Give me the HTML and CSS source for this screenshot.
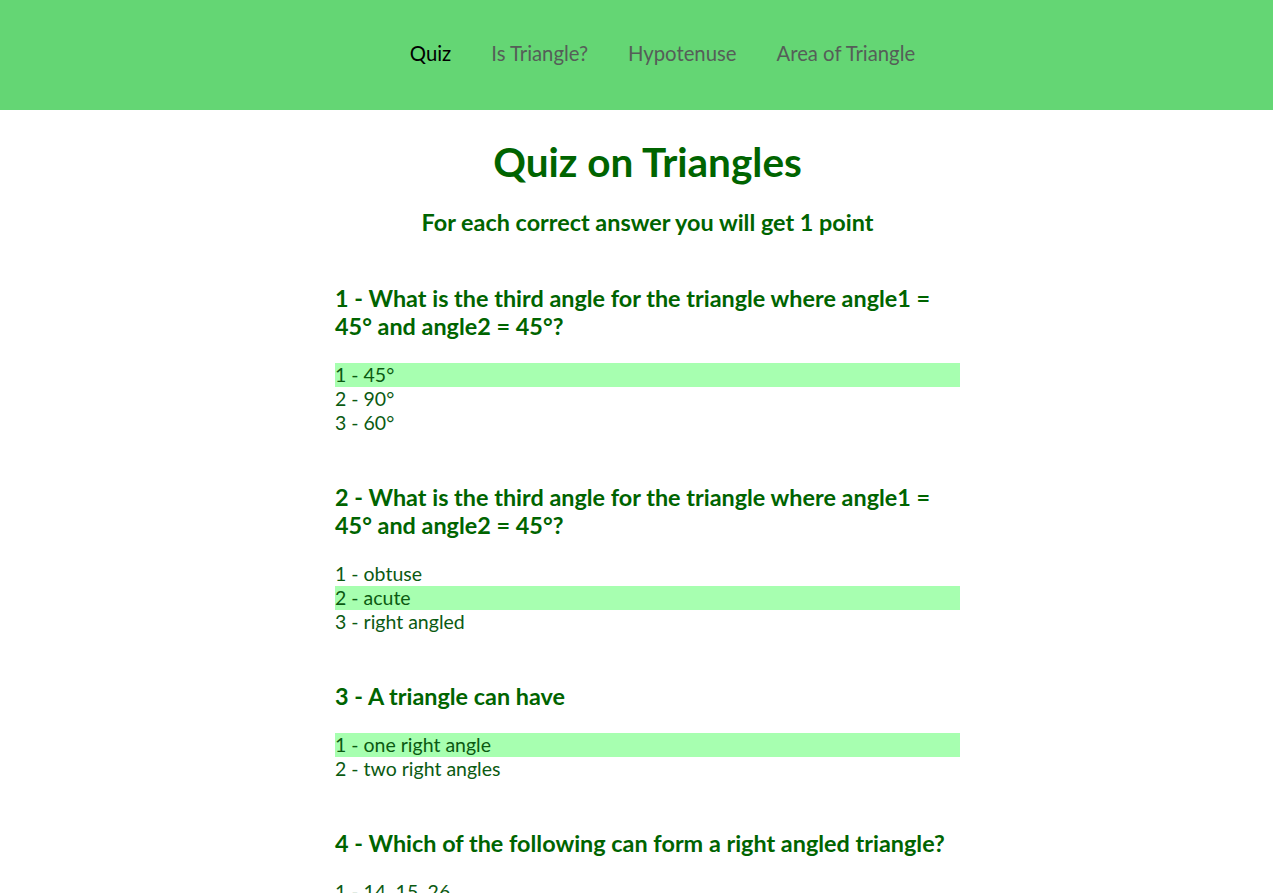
FILE: index.html
```html
<!DOCTYPE html>
<html lang="en">
<head>
<meta charset="utf-8">
<title>Quiz on Triangles</title>
<link rel="stylesheet" href="styles.css">
</head>
<body>
<header class="topbar">
  <nav class="nav">
    <a class="nav-link active" href="#">Quiz</a>
    <a class="nav-link" href="#">Is Triangle?</a>
    <a class="nav-link" href="#">Hypotenuse</a>
    <a class="nav-link" href="#">Area of Triangle</a>
  </nav>
</header>
<main class="page">
  <h1 class="title">Quiz on Triangles</h1>
  <h2 class="subtitle">For each correct answer you will get 1 point</h2>
  <div class="quiz">
    <section class="question">
      <h3 class="q-text">1 - What is the third angle for the triangle where angle1 = 45° and angle2 = 45°?</h3>
      <div class="options">
        <div class="option selected">1 - 45°</div>
        <div class="option">2 - 90°</div>
        <div class="option">3 - 60°</div>
      </div>
    </section>
    <section class="question">
      <h3 class="q-text">2 - What is the third angle for the triangle where angle1 = 45° and angle2 = 45°?</h3>
      <div class="options">
        <div class="option">1 - obtuse</div>
        <div class="option selected">2 - acute</div>
        <div class="option">3 - right angled</div>
      </div>
    </section>
    <section class="question">
      <h3 class="q-text">3 - A triangle can have</h3>
      <div class="options">
        <div class="option selected">1 - one right angle</div>
        <div class="option">2 - two right angles</div>
      </div>
    </section>
    <section class="question">
      <h3 class="q-text">4 - Which of the following can form a right angled triangle?</h3>
      <div class="options">
        <div class="option">1 - 14, 15, 26</div>
        <div class="option">2 - 12, 5, 13</div>
        <div class="option">3 - 7, 8, 9</div>
      </div>
    </section>
  </div>
</main>
</body>
</html>
```
FILE: styles.css
```css
* { box-sizing: border-box; }
html, body { margin: 0; padding: 0; }
body {
  font-family: Lato, "Open Sans", sans-serif;
  background: #ffffff;
  color: #006400;
}
.topbar {
  background: #64d674;
  height: 110px;
  display: flex;
  align-items: center;
  padding-bottom: 4px;
}
.nav {
  width: 100%;
  display: flex;
  justify-content: center;
  padding-left: 52px;
}
.nav-link {
  font-size: 20.3px;
  line-height: 24px;
  padding: 0 20px;
  color: #555e58;
  text-decoration: none;
}
.nav-link.active { color: #000000; }
.page {
  padding-left: 22px;
  display: flex;
  flex-direction: column;
  align-items: center;
}
.title {
  margin: 28px 0 0;
  font-size: 40.5px;
  line-height: 48px;
  font-weight: 700;
  text-align: center;
}
.subtitle {
  margin: 22px 0 0;
  font-size: 23.4px;
  line-height: 28px;
  font-weight: 700;
  text-align: center;
}
.quiz {
  width: 625px;
  margin-top: 48px;
}
.question { margin-bottom: 48px; }
.q-text {
  margin: 0 0 23px;
  font-size: 23.4px;
  line-height: 28px;
  font-weight: 700;
}
.option {
  font-size: 19.5px;
  line-height: 24px;
  color: #0b5a12;
}
.option.selected { background: #a7ffb0; }
```
